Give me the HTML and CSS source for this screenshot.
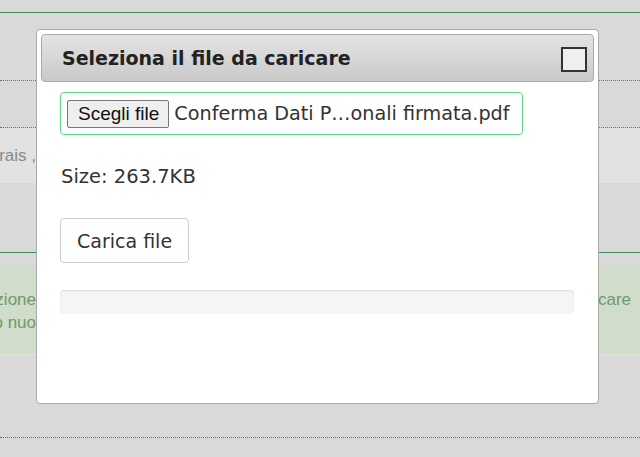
FILE: index.html
```html
<!DOCTYPE html>
<html lang="it">
<head>
    <meta charset="UTF-8">
    <meta name="viewport" content="width=device-width, initial-scale=1.0">
    <title>Carica file</title>
    <link rel="stylesheet" href="styles.css">
</head>
<body>

    <!-- Pagina sotto il dialog -->
    <div class="page">
        <div class="top-bar"></div>
        <div class="row row-dotted tall"></div>
        <div class="row row-dotted"></div>
        <div class="row light">
            <div class="clip"><span class="muted">Se li trovi e li inserirais ,</span></div>
        </div>
        <div class="row plain"></div>
        <div class="spacer"></div>
        <div class="notice">
            <div class="notice-line">
                <div class="clip"><span>Per completare l'operazione</span></div>
                <div class="clip-right"><span>care</span></div>
            </div>
            <div class="notice-line">
                <div class="clip"><span>procedendo nuo</span></div>
            </div>
        </div>
        <div class="bottom-gap"></div>
        <div class="row-dotted last"></div>
    </div>

    <!-- Dialog caricamento -->
    <div class="dialog">
        <div class="dialog-title">
            <span>Seleziona il file da caricare</span>
            <button class="close" title="Chiudi"></button>
        </div>
        <div class="dialog-body">
            <div class="file-field">
                <button class="file-btn">Scegli file</button>
                <span class="file-name">Conferma Dati P…onali firmata.pdf</span>
            </div>
            <p class="size">Size: 263.7KB</p>
            <button class="upload">Carica file</button>
            <div class="progress"><div class="progress-bar" style="width: 0%"></div></div>
        </div>
    </div>

</body>
</html>
```

FILE: styles.css
```css
body {
    margin: 0;
    background-color: #d9d9d9;
    font-family: 'DejaVu Sans', Verdana, sans-serif;
    color: #333;
    height: 457px;
    overflow: hidden;
}

/* background page */
.page {
    font-family: 'Liberation Sans', Arial, sans-serif;
    font-size: 17px;
}

.top-bar {
    height: 12px;
    border-bottom: 1px solid #3f8a5c;
}

.row {
    height: 46px;
}

.row.tall {
    height: 67px;
}

.row-dotted {
    border-bottom: 1px dotted #3f8a5c;
}

.row.light {
    height: 55px;
    background-color: #e2e2e2;
    display: flex;
    align-items: center;
}

.row.plain {
    height: 69px;
    border-bottom: 1px solid #3f8a5c;
}

.clip {
    width: 36px;
    overflow: hidden;
    display: flex;
    justify-content: flex-end;
    white-space: nowrap;
}

.clip-right {
    margin-left: auto;
    width: 42px;
    overflow: hidden;
    white-space: nowrap;
}

.muted {
    color: #888;
}

.spacer {
    height: 13px;
}

.notice {
    height: 89px;
    background-color: #d0ddca;
    border-bottom: 1px solid #dde4d9;
    color: #6f9a6c;
    padding-top: 22px;
    box-sizing: border-box;
}

.notice-line {
    display: flex;
    height: 23px;
    align-items: center;
}

.bottom-gap {
    height: 82px;
}

.last {
    height: 0;
}

/* dialog */
.dialog {
    position: absolute;
    left: 36px;
    top: 29px;
    width: 563px;
    height: 375px;
    background-color: #fff;
    border: 1px solid #aaa;
    border-radius: 4px;
    padding: 4px;
    box-sizing: border-box;
}

.dialog-title {
    display: flex;
    align-items: center;
    justify-content: space-between;
    height: 46px;
    padding: 0 6px 0 20px;
    background: linear-gradient(#e4e4e4, #c9c9c9);
    border: 1px solid #aaa;
    border-radius: 4px;
    font-weight: bold;
    font-size: 19px;
    color: #222;
}

.close {
    width: 26px;
    height: 25px;
    background-color: #efefef;
    border: 2px solid #333;
    border-radius: 0;
    padding: 0;
    margin-top: 2px;
}

.dialog-body {
    padding: 10px 19px;
}

.file-field {
    display: inline-flex;
    align-items: center;
    width: 449px;
    height: 41px;
    padding: 0 6px;
    border: 1px solid #60d88a;
    border-radius: 4px;
    box-sizing: content-box;
    font-size: 19.2px;
    white-space: nowrap;
}

.file-btn {
    height: 28px;
    padding: 0 9px 0 10px;
    margin-right: 5px;
    font-family: 'Liberation Sans', Arial, sans-serif;
    font-size: 19px;
    color: #111;
    background-color: #efefef;
    border: 1px solid #767676;
    border-radius: 2px;
}

.file-name {
    color: #333;
}

.size {
    margin: 30px 0 30px 1px;
    font-size: 19.5px;
}

.upload {
    display: block;
    height: 45px;
    padding: 0 16px;
    font-family: 'DejaVu Sans', Verdana, sans-serif;
    font-size: 19px;
    color: #333;
    background-color: #fff;
    border: 1px solid #ccc;
    border-radius: 4px;
}

.progress {
    margin-top: 27px;
    width: 514px;
    height: 24px;
    background-color: #f5f5f5;
    border-radius: 4px;
    box-shadow: inset 0 1px 2px rgba(0, 0, 0, 0.1);
}

.progress-bar {
    height: 100%;
    background-color: #5cb85c;
}
```
